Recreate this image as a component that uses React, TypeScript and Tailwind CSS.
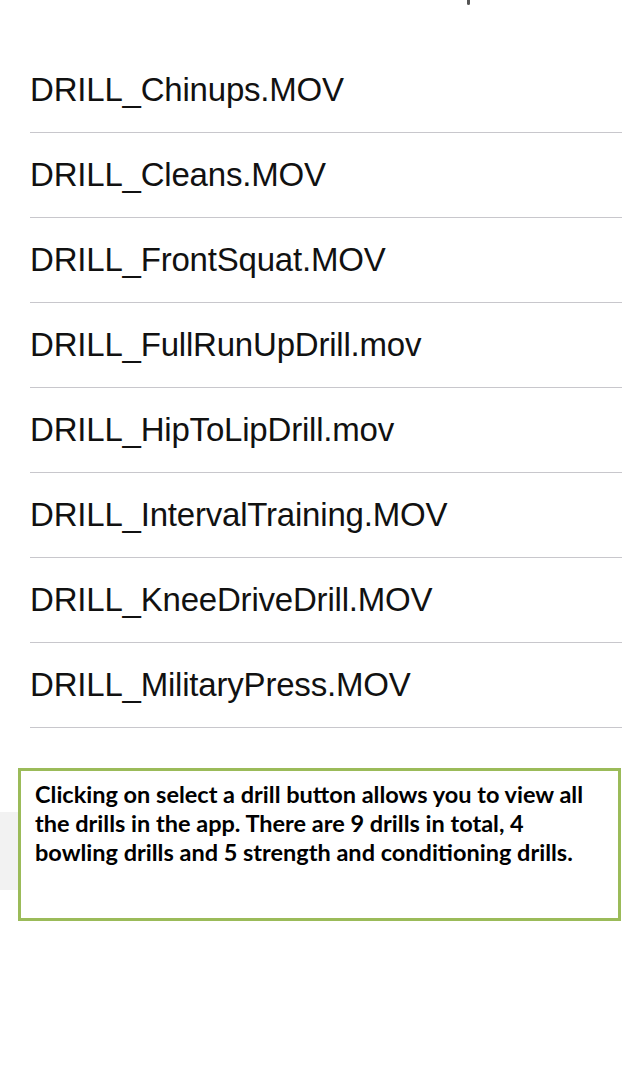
const drills = [
  "DRILL_Chinups.MOV",
  "DRILL_Cleans.MOV",
  "DRILL_FrontSquat.MOV",
  "DRILL_FullRunUpDrill.mov",
  "DRILL_HipToLipDrill.mov",
  "DRILL_IntervalTraining.MOV",
  "DRILL_KneeDriveDrill.MOV",
  "DRILL_MilitaryPress.MOV",
];

export default function App() {
  return (
    <div className="w-[622px] h-[1069px] bg-white overflow-hidden relative">
      {/* clipped status bar remnant */}
      <div className="h-[48px] flex justify-end pr-[152px]">
        <div className="w-[3px] h-[5px] bg-[#555] rounded-b-sm" />
      </div>

      <ul className="pl-[30px]">
        {drills.map((name) => (
          <li
            key={name}
            className="h-[85px] flex items-center border-b border-[#c8c7cc] text-[33px] text-[#111] font-['Liberation_Sans',Arial,sans-serif] tracking-[-0.2px]"
          >
            {name}
          </li>
        ))}
      </ul>

      <div className="flex items-start mt-[40px]">
        <div className="w-[18px] h-[78px] mt-[44px] bg-[#f2f2f2] shrink-0" />
        <div className="w-[603px] h-[153px] border-[3px] border-[#9bbb59] bg-white pl-[14px] pt-[9px] font-['Lato','Open_Sans',sans-serif] font-bold text-[23.5px] leading-[29px] text-black">
          Clicking on select a drill button allows you to view all
          <br />
          the drills in the app. There are 9 drills in total, 4
          <br />
          bowling drills and 5 strength and conditioning drills.
        </div>
      </div>
    </div>
  );
}
